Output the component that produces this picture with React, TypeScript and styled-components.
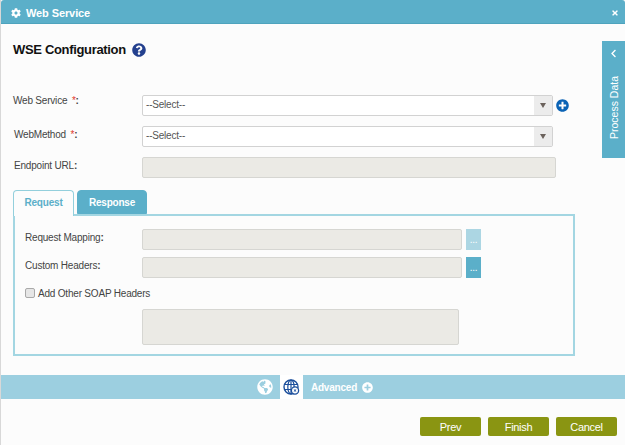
import React from 'react';
import styled, { createGlobalStyle } from 'styled-components';
import { FaCog, FaTimes, FaQuestionCircle, FaPlusCircle, FaChevronLeft, FaGlobeAmericas } from 'react-icons/fa';

const GlobalStyle = createGlobalStyle`
    html, body {
        margin: 0;
        padding: 0;
        background: #fcfcfc;
    }
    body {
        font-family: "Liberation Sans", Arial, sans-serif;
        font-size: 10px;
        letter-spacing: -0.2px;
        color: #444;
    }
`

const Dialog = styled.div`
    position: relative;
    width: 625px;
    height: 445px;
    overflow: hidden;
    box-sizing: border-box;
    border-left: 1px solid #d8d8d8;
    background: #fcfcfc;
    display: flex;
    flex-direction: column;
`

const TitleBar = styled.div`
    height: 24px;
    flex: none;
    box-sizing: border-box;
    background: #5bafc9;
    border-bottom: 1px solid #4ea3bd;
    border-radius: 3px 3px 0 0;
    padding: 3px 6px 0 10px;
    display: flex;
    align-items: center;
    gap: 5px;
    color: #fff;
    font-size: 11px;
    letter-spacing: -0.1px;
    font-weight: 700;

    span {
        flex: 1;
    }
`

const Content = styled.div`
    flex: 1;
    padding: 0 49px 0 12px;
    display: flex;
    flex-direction: column;
`

const Heading = styled.div`
    height: 51px;
    display: flex;
    align-items: center;
    gap: 6px;
    font-size: 13px;
    letter-spacing: -0.33px;
    font-weight: 700;
    color: #111;

    svg {
        color: #24408e;
    }
`

const Form = styled.div`
    margin-top: 20px;
    display: flex;
    flex-direction: column;
    gap: 10px;
`

const Row = styled.div`
    display: flex;
    align-items: center;
    height: 21px;
`

const Label = styled.label<{ $inset?: number; $lift?: number }>`
    width: ${p => 129 - (p.$inset ?? 0)}px;
    padding-left: ${p => p.$inset ?? 0}px;
    flex: none;
    margin-top: ${p => p.$lift ?? -4}px;
    color: #444;

    i {
        color: #e0392d;
        font-style: normal;
        margin-left: 2px;
    }
    b {
        font-weight: 700;
    }
`

const SelectBox = styled.div`
    width: 411px;
    height: 21px;
    box-sizing: border-box;
    border: 1px solid #d2d2d2;
    border-radius: 2px;
    background: #fff;
    display: flex;
    align-items: center;
    padding-left: 3px;
    color: #555;
`

const SelectText = styled.span`
    flex: 1;
    padding-bottom: 2px;
`

const SelectArrow = styled.span`
    width: 18px;
    height: 19px;
    background: #ececec;
    display: flex;
    align-items: center;
    justify-content: center;

    &::after {
        content: '';
        border-left: 3px solid transparent;
        border-right: 3px solid transparent;
        border-top: 5px solid #6b625c;
    }
`

const AddButton = styled.span`
    margin-left: 3px;
    display: flex;
    color: #0b63b5;
`

const ReadOnly = styled.div<{ $width: number; $height?: number }>`
    width: ${p => p.$width}px;
    height: ${p => p.$height ?? 21}px;
    box-sizing: border-box;
    border: 1px solid #d6d6d2;
    border-radius: 2px;
    background: #ebeae5;
    flex: none;
`

const Tabs = styled.div`
    margin-top: 12px;
    display: flex;
    gap: 3px;
    height: 25px;
    position: relative;
    z-index: 1;
`

const Tab = styled.div<{ $active?: boolean }>`
    box-sizing: border-box;
    width: ${p => (p.$active ? 61 : 70)}px;
    height: ${p => (p.$active ? 26 : 24)}px;
    border: 1px solid ${p => (p.$active ? '#93cfdc' : '#5bafc9')};
    border-bottom: ${p => (p.$active ? 'none' : '1px solid #5bafc9')};
    border-radius: 4px 4px 0 0;
    background: ${p => (p.$active ? '#fcfcfc' : '#5bafc9')};
    color: ${p => (p.$active ? '#5bafc9' : '#fff')};
    font-weight: 700;
    display: flex;
    align-items: center;
    justify-content: center;
    padding-bottom: ${p => (p.$active ? 2 : 0)}px;
`

const Panel = styled.div`
    box-sizing: border-box;
    width: 562px;
    height: 142px;
    margin-top: -1px;
    border: 2px solid #a3d6e2;
    padding: 13px 10px 0;
    display: flex;
    flex-direction: column;
    gap: 7px;
`

const PanelRow = styled.div`
    display: flex;
    align-items: center;
    height: 21px;
`

const PanelLabel = styled.label`
    width: 117px;
    flex: none;
    margin-top: -5px;
    color: #444;

    b {
        font-weight: 700;
    }
`

const DotsButton = styled.span<{ $dim?: boolean }>`
    margin-left: 4px;
    width: 15px;
    height: 21px;
    background: ${p => (p.$dim ? '#acd6e3' : '#5bafc9')};
    color: #fff;
    font-size: 10px;
    display: flex;
    align-items: center;
    justify-content: center;
`

const CheckRow = styled.label`
    display: flex;
    align-items: center;
    gap: 3px;
    height: 16px;
    color: #444;
`

const CheckBox = styled.span`
    width: 10px;
    height: 10px;
    box-sizing: border-box;
    border: 1px solid #a9a9a9;
    border-radius: 2px;
    background: #e6e6e6;
`

const TextRow = styled.div`
    padding-left: 117px;
    margin-top: 1px;
`

const Band = styled.div`
    margin-top: 19px;
    height: 24px;
    flex: none;
    background: #9ccfe0;
    display: flex;
    align-items: center;
    justify-content: center;
    padding-left: 1px;
    color: #fff;
    font-weight: 700;
`

const BandIcon = styled.span<{ $active?: boolean }>`
    width: 23px;
    height: 24px;
    margin-left: ${p => (p.$active ? 3 : 0)}px;
    display: flex;
    align-items: center;
    justify-content: center;
    background: ${p => (p.$active ? '#fff' : 'transparent')};
`

const Advanced = styled.span`
    margin-left: 8px;
    display: flex;
    align-items: center;
    gap: 5px;
`

const Footer = styled.div`
    height: 46px;
    flex: none;
    box-sizing: border-box;
    padding: 9px 8px 0 0;
    display: flex;
    align-items: center;
    justify-content: flex-end;
    gap: 7px;
`

const ActionButton = styled.button`
    width: 61px;
    height: 19px;
    border: none;
    border-radius: 2px;
    padding: 0;
    background: #8a9512;
    color: #fff;
    font-family: inherit;
    font-size: 11px;
    letter-spacing: -0.3px;
`

const SideTab = styled.div`
    position: absolute;
    top: 41px;
    right: 0;
    width: 23px;
    height: 117px;
    background: #5bafc9;
    color: #fff;
    display: flex;
    flex-direction: column;
    align-items: center;
    padding-top: 8px;
    box-sizing: border-box;

    span {
        margin-top: 18px;
        writing-mode: vertical-rl;
        transform: rotate(180deg);
        font-size: 10.5px;
        letter-spacing: 0;
    }
`

const GridGlobe = () => (
    <svg width="17" height="17" viewBox="0 0 17 17" fill="none" stroke="#1c4f9c">
        <circle cx="8" cy="8" r="7" strokeWidth="1.4" />
        <ellipse cx="8" cy="8" rx="3.2" ry="7" strokeWidth="1.2" />
        <path d="M1 5.5h14M1 10.5h14M8 1v14" strokeWidth="1.2" />
        <circle cx="12" cy="11.5" r="3.6" fill="#fff" strokeWidth="1.3" />
        <path d="M10.8 10.4l2.4 2.2M13.2 10.4l-2.4 2.2" strokeWidth="1" />
    </svg>
);

const App = () => {
    return (
        <Dialog>
            <GlobalStyle />
            <TitleBar>
                <FaCog size={10} />
                <span>Web Service</span>
                <FaTimes size={8} />
            </TitleBar>
            <Content>
                <Heading>
                    WSE Configuration
                    <FaQuestionCircle size={14} />
                </Heading>
                <Form>
                    <Row>
                        <Label $lift={-11}>Web Service <i>*</i><b>:</b></Label>
                        <SelectBox>
                            <SelectText>--Select--</SelectText>
                            <SelectArrow />
                        </SelectBox>
                        <AddButton><FaPlusCircle size={13} /></AddButton>
                    </Row>
                    <Row>
                        <Label $inset={1}>WebMethod <i>*</i><b>:</b></Label>
                        <SelectBox>
                            <SelectText>--Select--</SelectText>
                            <SelectArrow />
                        </SelectBox>
                    </Row>
                    <Row>
                        <Label $inset={1}>Endpoint URL<b>:</b></Label>
                        <ReadOnly $width={414} />
                    </Row>
                </Form>
                <Tabs>
                    <Tab $active>Request</Tab>
                    <Tab>Response</Tab>
                </Tabs>
                <Panel>
                    <PanelRow>
                        <PanelLabel>Request Mapping<b>:</b></PanelLabel>
                        <ReadOnly $width={320} />
                        <DotsButton $dim>...</DotsButton>
                    </PanelRow>
                    <PanelRow>
                        <PanelLabel>Custom Headers<b>:</b></PanelLabel>
                        <ReadOnly $width={320} />
                        <DotsButton>...</DotsButton>
                    </PanelRow>
                    <CheckRow>
                        <CheckBox />
                        Add Other SOAP Headers
                    </CheckRow>
                    <TextRow>
                        <ReadOnly $width={317} $height={36} />
                    </TextRow>
                </Panel>
            </Content>
            <Band>
                <BandIcon><FaGlobeAmericas size={16} color="#fff" /></BandIcon>
                <BandIcon $active><GridGlobe /></BandIcon>
                <Advanced>
                    Advanced
                    <FaPlusCircle size={11} />
                </Advanced>
            </Band>
            <Footer>
                <ActionButton>Prev</ActionButton>
                <ActionButton>Finish</ActionButton>
                <ActionButton>Cancel</ActionButton>
            </Footer>
            <SideTab>
                <FaChevronLeft size={9} />
                <span>Process Data</span>
            </SideTab>
        </Dialog>
    );
};

export default App;
